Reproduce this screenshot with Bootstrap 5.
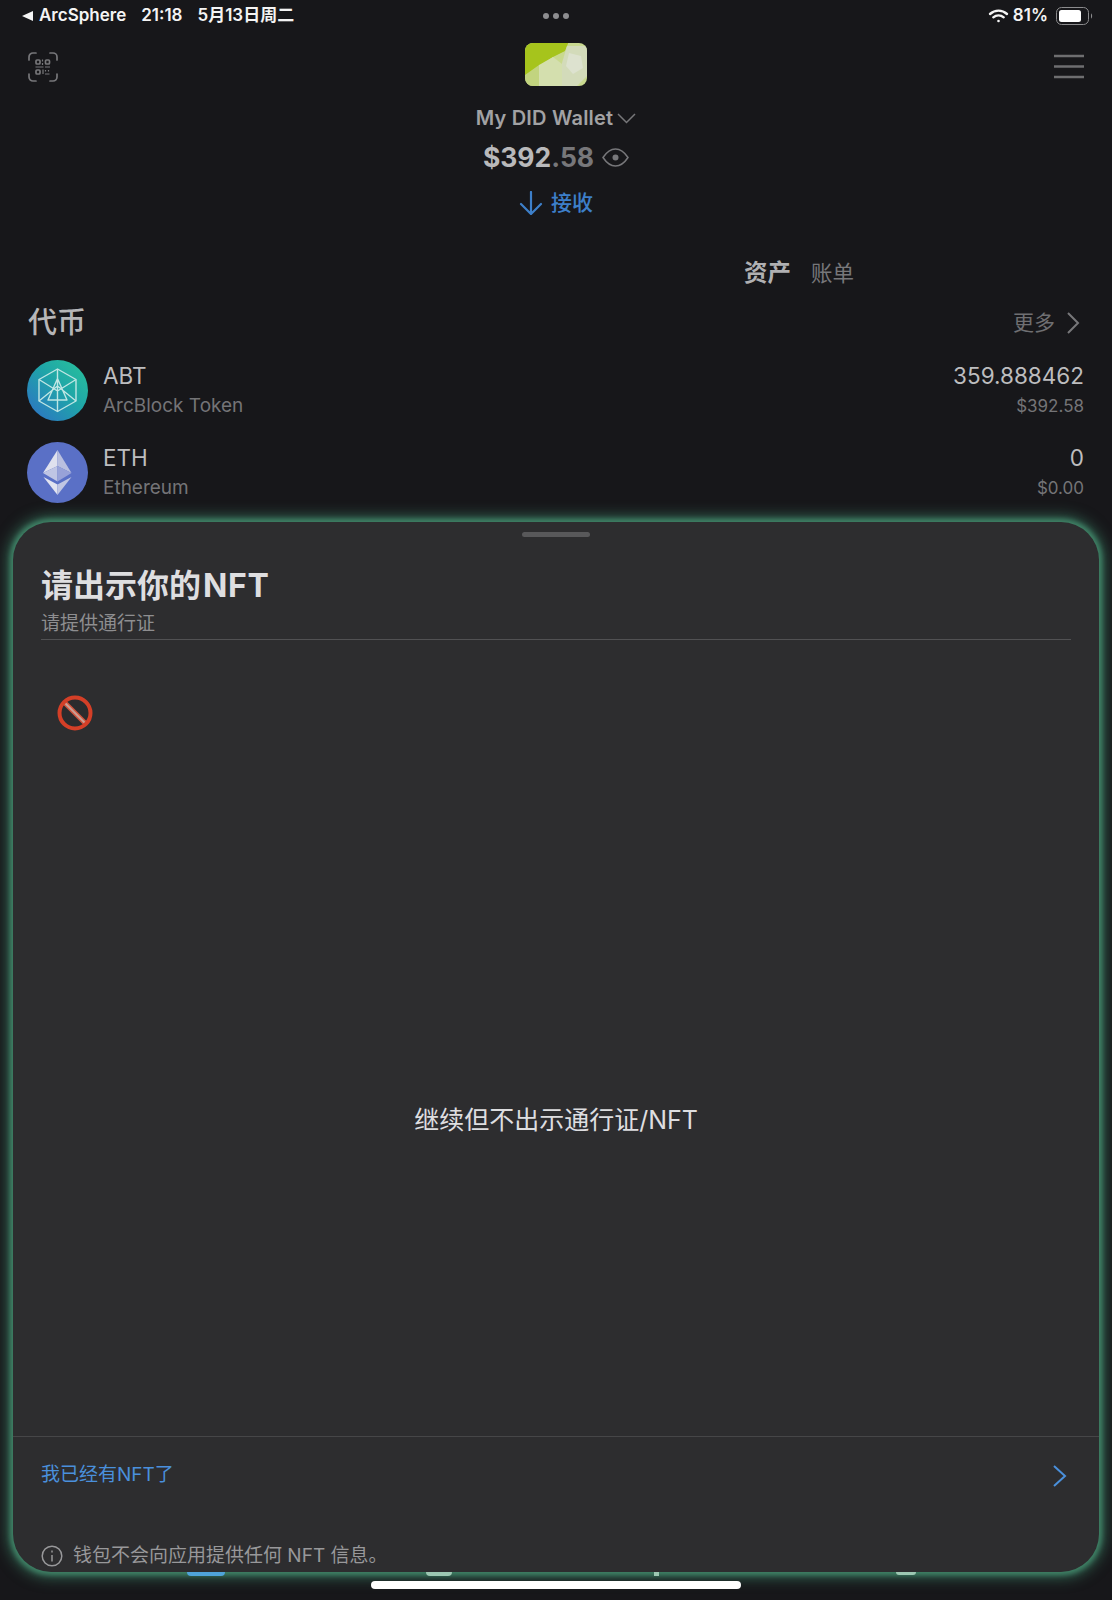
<!DOCTYPE html>
<html lang="en">
<head>
  <meta charset="UTF-8">
  <meta name="viewport" content="width=device-width, initial-scale=1">
  <title>My DID Wallet</title>
  <link href="https://cdn.jsdelivr.net/npm/bootstrap@5.3.0/dist/css/bootstrap.min.css" rel="stylesheet">
  <style>
    html, body { height: 1600px; }
    body {
      background: #17171a;
      color: #c4c4c6;
      font-family: "Inter", "Noto Sans CJK SC", sans-serif;
      overflow: hidden;
      position: relative;
    }
    .status-bar { height: 32px; padding: 0 18px 0 22px; color: #f4f4f4; font-size: 17px; font-weight: 600; }
    .status-gap { gap: 15px; }
    .back-tri { width: 0; height: 0; border-style: solid; border-width: 5.500px 11px 5.500px 0; border-color: transparent #f4f4f4 transparent transparent; margin-right: 6px; }
    .dots { gap: 4px; }
    .dots span { width: 6px; height: 6px; border-radius: 50%; background: #8d8d90; }
    .top-row { padding: 11px 28px 0 28px; height: 54px; }
    .wallet-name { font-size: 20px; font-weight: 600; color: #a2a2a4; line-height: 24px; margin-top: 20px; letter-spacing: .2px; }
    .balance { font-size: 26.500px; font-weight: 700; color: #b9b9bb; line-height: 38px; margin-top: 8px; }
    .balance span { color: #77777a; }
    .receive { color: #3d7fc9; font-size: 21px; font-weight: 500; line-height: 28px; margin-top: 13px; }
    .tabs-row { padding-left: 744px; gap: 20px; font-size: 21.500px; line-height: 30px; margin-top: 41px; color: #77777a; align-items: center; }
    .tabs-row b { color: #b0b0b2; font-size: 23.500px; }
    .coin-head { padding: 0 32px 0 28px; margin-top: 14px; height: 42px; }
    .coin-title { font-size: 29px; font-weight: 500; color: #b6b6b8; }
    .coin-more { font-size: 21px; color: #6f6f72; gap: 11px; }
    .coin-row { padding: 0 28px 0 27px; height: 61px; margin-bottom: 21px; }
    .coin-list { margin-top: 16px; }
    .coin-ico { width: 61px; height: 61px; flex: none; }
    .coin-sym { font-size: 22.500px; line-height: 30px; color: #bdbdbf; }
    .coin-sub { font-size: 19px; line-height: 30px; color: #747477; }
    .coin-sub-right { font-size: 17px; }
    .coin-info { margin-left: 15px; }

    .sheet {
      position: relative;
      margin: -2px 13px 0 13px;
      height: 1050px;
      background: #2d2d2f;
      border-radius: 38px;
      box-shadow: 0 0 5px 3px #3f8266, 0 0 14px 6px rgba(60, 125, 100, .7);
      overflow: hidden;
    }
    .grabber { width: 68px; height: 5px; border-radius: 3px; background: #58585a; margin: 10px auto 0; }
    .sheet-head { margin: 0 28px; padding-top: 28px; border-bottom: 1px solid #515153; height: 103px; }
    .sheet-title { font-size: 32px; font-weight: 700; color: #dedee0; line-height: 42px; }
    .sheet-title em { font-style: normal; letter-spacing: .6px; margin-left: 2px; }
    .sheet-sub { font-size: 19px; color: #8e8e90; line-height: 26px; margin-top: 4px; }
    .no-mark { margin: 55px 0 0 44px; width: 36px; height: 36px; display: block; }
    .skip-line { height: 705px; padding-top: 64px; }
    .skip-text { font-size: 25px; color: #dedee0; margin-top: 10px; }
    .have-row { border-top: 1px solid #464648; height: 78px; padding: 0 32px 0 28px; color: #4a90dc; font-size: 19px; }
    .notice { padding: 0 0 0 28px; margin-top: 29px; gap: 10px; font-size: 19px; color: #98989a; line-height: 26px; }
    .peek { position: absolute; background: #4fa3d9; }
    .home-bar { position: absolute; left: 371px; top: 1581px; width: 370px; height: 8px; background: #fff; border-radius: 4px; }
    .peek-blue { left: 187px; top: 1572px; width: 38px; height: 4px; border-radius: 0 0 4px 4px; }
    .peek-arc { left: 426px; top: 1572px; width: 26px; height: 4px; border-radius: 0 0 13px 13px; background: #9cc7b2; }
    .peek-arc2 { left: 896px; top: 1572px; width: 20px; height: 3px; border-radius: 0 0 10px 10px; background: #9cc7b2; }
    .peek-tip { left: 654px; top: 1572px; width: 5px; height: 4px; background: #9cc7b2; }
  </style>
</head>
<body>

<div class="status-bar d-flex align-items-center justify-content-between">
  <div class="d-flex align-items-center status-gap">
    <div class="d-flex align-items-center"><i class="back-tri"></i>ArcSphere</div>
    <span>21:18</span>
    <span>5月13日周二</span>
  </div>
  <div class="dots d-flex position-absolute start-50 translate-middle-x"><span></span><span></span><span></span></div>
  <div class="d-flex align-items-center gap-1">
    <svg width="21" height="16" viewBox="0 0 21 16" fill="none" stroke="#f4f4f4" stroke-width="2.400" stroke-linecap="round"><path d="M2 6c5-4.500 12-4.500 17 0"/><path d="M5.300 9.300c3-2.600 7.400-2.600 10.400 0"/><circle cx="10.500" cy="13" r="1.300" fill="#f4f4f4" stroke="none"/></svg>
    <span>81%</span>
    <svg width="38" height="18" viewBox="0 0 38 18" class="ms-1"><rect x=".5" y=".5" width="32" height="17" rx="5" fill="none" stroke="#8c8c8e"/><rect x="3" y="3" width="22" height="12" rx="2.500" fill="#fff"/><path d="M35 6.500c1.500.5 1.500 4.500 0 5z" fill="#8c8c8e"/></svg>
  </div>
</div>

<div class="top-row d-flex justify-content-between align-items-center">
  <svg width="30" height="30" viewBox="0 0 30 30" fill="none" stroke="#77777a" stroke-width="1.700" class="mt-1">
    <path d="M1 8V5a4 4 0 0 1 4-4h3M22 1h3a4 4 0 0 1 4 4v3M29 22v3a4 4 0 0 1-4 4h-3M8 29H5a4 4 0 0 1-4-4v-3" stroke-linecap="round"/>
    <rect x="8" y="8" width="4" height="4" rx="1"/><rect x="17.500" y="8" width="4" height="4" rx="1"/><rect x="8" y="18" width="4" height="4" rx="1"/>
    <path d="M7.500 15h8M17 15h5M14.500 7.500v2M14.500 11v2M15 17.500v4.500M17.500 18v1.500M20.500 18v1.500M17 22h4.500" stroke-width="1.200"/>
  </svg>
  <svg width="62" height="43" viewBox="0 0 62 43">
    <defs>
      <clipPath id="logoClip"><rect width="62" height="43" rx="8"/></clipPath>
      <filter id="logoSoft"><feGaussianBlur stdDeviation=".7"/></filter>
    </defs>
    <g clip-path="url(#logoClip)">
      <rect width="62" height="43" fill="#c9d98f"/>
      <g filter="url(#logoSoft)">
        <path d="M-2-2h46l-4 10-12 6-12 8-18 12z" fill="#a6c41a"/>
        <path d="M0 32l14-10 0 21H0z" fill="#c2d47f"/>
        <path d="M14 22l14-8 9 7v22H14z" fill="#d4dfae"/>
        <path d="M37 20l5-17h22v28L50 45H37z" fill="#d3dbba"/>
        <path d="M44 10l12 3 2 12-10 6-7-8z" fill="#dde2cf"/>
      </g>
    </g>
  </svg>
  <svg width="30" height="25" viewBox="0 0 30 25" stroke="#6e6e70" stroke-width="2.400" class="mt-1"><path d="M0 2h30M0 12.500h30M0 23h30"/></svg>
</div>

<div class="text-center">
  <div class="wallet-name d-flex justify-content-center align-items-center gap-1">My DID Wallet
    <svg width="19" height="11" viewBox="0 0 19 11" fill="none" stroke="#77777a" stroke-width="1.500"><path d="M1 1l8.500 8.500L18 1"/></svg>
  </div>
  <div class="balance d-flex justify-content-center align-items-center gap-2">
    <div>$392<span>.58</span></div>
    <svg width="27" height="19" viewBox="0 0 27 19" fill="none" stroke="#77777a" stroke-width="1.500"><path d="M1 9.500C5 3.500 9 1 13.500 1S22 3.500 26 9.500C22 15.500 18 18 13.500 18S5 15.500 1 9.500z"/><circle cx="13.500" cy="9.500" r="3" fill="#77777a" stroke="none"/></svg>
  </div>
  <div class="receive d-flex justify-content-center align-items-center gap-2">
    <svg width="24" height="24" viewBox="0 0 24 24" fill="none" stroke="#3d7fc9" stroke-width="2.200" stroke-linecap="round"><path d="M12 1v22M2 13l10 10 10-10"/></svg>
    <span>接收</span>
  </div>
</div>

<div class="tabs-row d-flex"><b>资产</b><span>账单</span></div>

<div class="coin-head d-flex align-items-center justify-content-between">
  <div class="coin-title">代币</div>
  <div class="coin-more d-flex align-items-center">更多
    <svg width="14" height="22" viewBox="0 0 14 22" fill="none" stroke="#77777a" stroke-width="2"><path d="M2 1l10 10L2 21"/></svg>
  </div>
</div>

<div class="coin-list">
  <div class="coin-row d-flex align-items-center">
    <svg class="coin-ico" viewBox="0 0 61 61">
      <defs><linearGradient id="abtGrad" x1="0" y1="1" x2="1" y2="0"><stop offset="0" stop-color="#2f6ec8"/><stop offset=".55" stop-color="#1fa5a8"/><stop offset="1" stop-color="#2ac49a"/></linearGradient></defs>
      <circle cx="30.500" cy="30.500" r="30.500" fill="url(#abtGrad)"/>
      <g fill="none" stroke="#bfe6e4" stroke-width="1.400" stroke-linejoin="round">
        <path d="M30.500 9l18.500 10.500v21.500L30.500 51.500 12 41V19.500z"/>
        <path d="M12 19.500L30.500 31 49 19.500M30.500 31v20.500M30.500 18.500L21 40h19zM30.500 9v22M12 41L30.500 26 49 41"/>
      </g>
    </svg>
    <div class="coin-info">
      <div class="coin-sym">ABT</div>
      <div class="coin-sub">ArcBlock Token</div>
    </div>
    <div class="ms-auto text-end">
      <div class="coin-sym">359.888462</div>
      <div class="coin-sub coin-sub-right">$392.58</div>
    </div>
  </div>
  <div class="coin-row d-flex align-items-center">
    <svg class="coin-ico" viewBox="0 0 61 61">
      <circle cx="30.500" cy="30.500" r="30.500" fill="#5a70c6"/>
      <path d="M30.500 8L16 31l14.500-7z" fill="#dfe1ee"/>
      <path d="M30.500 8L44.500 31l-14-7z" fill="#b9bfdf"/>
      <path d="M16 31l14.500 8.500V24z" fill="#bfc5e4"/>
      <path d="M44.500 31l-14 8.500V24z" fill="#98a2d8"/>
      <path d="M16.500 35l14 18V42.500z" fill="#e2e4f0"/>
      <path d="M44.500 35L30.500 53V42.500z" fill="#c0c6e3"/>
    </svg>
    <div class="coin-info">
      <div class="coin-sym">ETH</div>
      <div class="coin-sub">Ethereum</div>
    </div>
    <div class="ms-auto text-end">
      <div class="coin-sym">0</div>
      <div class="coin-sub coin-sub-right">$0.00</div>
    </div>
  </div>
</div>

<div class="sheet">
  <div class="grabber"></div>
  <div class="sheet-head">
    <div class="sheet-title">请出示你的<em>NFT</em></div>
    <div class="sheet-sub">请提供通行证</div>
  </div>
  <svg class="no-mark" viewBox="0 0 36 36">
    <circle cx="18" cy="18" r="14" fill="#2b2b2d"/>
    <path d="M8 8l20 20" stroke="#d2553e" stroke-width="5"/>
    <path d="M8 8l20 20" stroke="#c9a096" stroke-width="2"/>
    <circle cx="18" cy="18" r="15.500" fill="none" stroke="#d43f27" stroke-width="4"/>
  </svg>
  <div class="skip-line d-flex align-items-center justify-content-center">
    <div class="skip-text">继续但不出示通行证/NFT</div>
  </div>
  <div class="have-row d-flex align-items-center justify-content-between">
    <span>我已经有NFT了</span>
    <svg width="15" height="22" viewBox="0 0 15 22" fill="none" stroke="#4a90dc" stroke-width="2"><path d="M2 1l11 10L2 21"/></svg>
  </div>
  <div class="notice d-flex align-items-center">
    <svg width="22" height="22" viewBox="0 0 22 22" fill="none" stroke="#98989a" stroke-width="1.500"><circle cx="11" cy="11" r="9.800"/><path d="M11 10v6.500M11 5.500v2"/></svg>
    <span>钱包不会向应用提供任何 NFT 信息。</span>
  </div>
</div>

<div class="peek peek-blue"></div>
<div class="peek peek-arc"></div>
<div class="peek peek-tip"></div>
<div class="peek peek-arc2"></div>
<div class="home-bar"></div>

<script src="https://cdn.jsdelivr.net/npm/bootstrap@5.3.0/dist/js/bootstrap.bundle.min.js"></script>
</body>
</html>
